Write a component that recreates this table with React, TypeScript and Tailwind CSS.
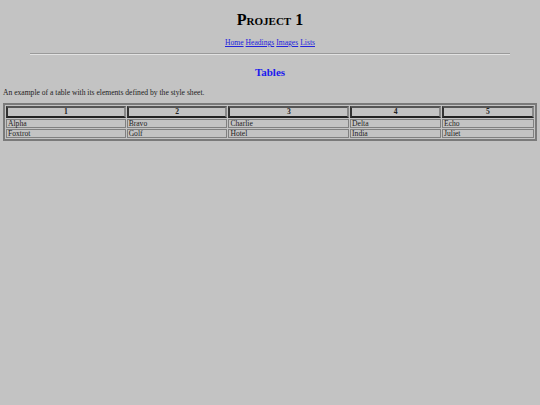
const headers = ["1", "2", "3", "4", "5"];
const rows = [
  ["Alpha", "Bravo", "Charlie", "Delta", "Echo"],
  ["Foxtrot", "Golf", "Hotel", "India", "Juliet"],
];
const widths = ["w-[121px]", "w-[102px]", "w-[122px]", "w-[92px]", "w-[93px]"];

export default function App() {
  return (
    <div className="min-h-[405px] bg-[#c3c3c3] font-['Liberation_Serif',serif] text-[7.6px] text-[#222] px-[3px] pt-[10px]">
      {/* Header */}
      <h1 className="text-center text-[16px] font-bold [font-variant:small-caps] text-black leading-[20px]">
        Project 1
      </h1>
      <nav className="mt-[8px] text-center text-[7.6px] leading-[10px]">
        {["Home", "Headings", "Images", "Lists"].map((l) => (
          <a key={l} href="#" className="text-[#2222dd] underline mr-[2px] last:mr-0">
            {l}
          </a>
        ))}
      </nav>
      <hr className="mx-[27px] mt-[5px] border-t-[1px] border-b-[1px] border-t-[#9a9a9a] border-b-[#e2e2e2]" />

      {/* Tables */}
      <h2 className="mt-[9px] text-center text-[11px] font-bold text-[#1a1aee] leading-[16px]">
        Tables
      </h2>
      <p className="mt-[8px] leading-[10px]">
        An example of a table with its elements defined by the style sheet.
      </p>
      <table className="mt-[5px] w-full border-2 border-[#7a7a7a] border-separate border-spacing-[1px]">
        <thead>
          <tr>
            {headers.map((h, i) => (
              <th
                key={h}
                className={`${widths[i]} h-[11px] p-0 text-center font-bold leading-[8px] border-2 border-t-[#555] border-l-[#333] border-r-[#888] border-b-[#222]`}
              >
                {h}
              </th>
            ))}
          </tr>
        </thead>
        <tbody>
          {rows.map((r) => (
            <tr key={r[0]}>
              {r.map((c) => (
                <td
                  key={c}
                  className="h-[9px] p-0 pl-[1px] leading-[7px] border border-[#808080]"
                >
                  {c}
                </td>
              ))}
            </tr>
          ))}
        </tbody>
      </table>
    </div>
  );
}
